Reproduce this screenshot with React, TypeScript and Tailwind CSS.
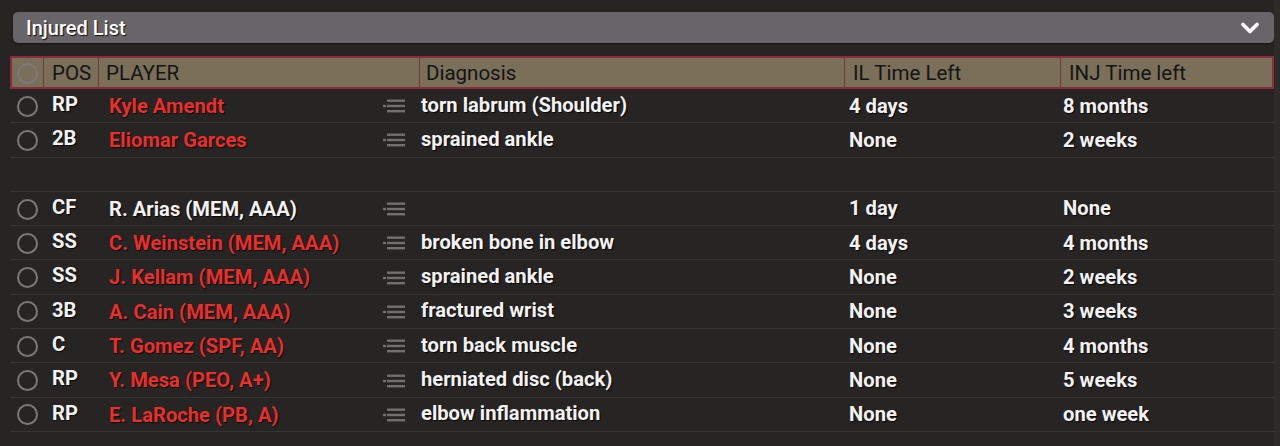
import { ChevronDown } from "lucide-react";

type Row = {
  pos: string;
  name: string;
  injured: boolean;
  diagnosis: string;
  il: string;
  inj: string;
} | null;

const rows: Row[] = [
  { pos: "RP", name: "Kyle Amendt", injured: true, diagnosis: "torn labrum (Shoulder)", il: "4 days", inj: "8 months" },
  { pos: "2B", name: "Eliomar Garces", injured: true, diagnosis: "sprained ankle", il: "None", inj: "2 weeks" },
  null,
  { pos: "CF", name: "R. Arias (MEM, AAA)", injured: false, diagnosis: "", il: "1 day", inj: "None" },
  { pos: "SS", name: "C. Weinstein (MEM, AAA)", injured: true, diagnosis: "broken bone in elbow", il: "4 days", inj: "4 months" },
  { pos: "SS", name: "J. Kellam (MEM, AAA)", injured: true, diagnosis: "sprained ankle", il: "None", inj: "2 weeks" },
  { pos: "3B", name: "A. Cain (MEM, AAA)", injured: true, diagnosis: "fractured wrist", il: "None", inj: "3 weeks" },
  { pos: "C", name: "T. Gomez (SPF, AA)", injured: true, diagnosis: "torn back muscle", il: "None", inj: "4 months" },
  { pos: "RP", name: "Y. Mesa (PEO, A+)", injured: true, diagnosis: "herniated disc (back)", il: "None", inj: "5 weeks" },
  { pos: "RP", name: "E. LaRoche (PB, A)", injured: true, diagnosis: "elbow inflammation", il: "None", inj: "one week" },
];

const cols = "grid grid-cols-[32px_55px_321px_425px_216px_1fr]";
const shadow = "[text-shadow:1px_1px_1px_rgba(0,0,0,0.85)]";

function ListIcon() {
  return (
    <svg width="23" height="14" viewBox="0 0 23 14" className="shrink-0">
      <rect x="4" y="0.5" width="18" height="2.4" fill="#707070" />
      <rect x="0" y="5.8" width="3" height="2.4" fill="#707070" />
      <rect x="4" y="5.8" width="18" height="2.4" fill="#707070" />
      <rect x="4" y="11" width="18" height="2.4" fill="#707070" />
    </svg>
  );
}

function Radio() {
  return <div className="h-[21px] w-[21px] rounded-full border-2 border-[#7a7878]" />;
}

export default function App() {
  return (
    <div className="flex h-[446px] w-[1280px] bg-[#262524] font-['Roboto',sans-serif]">
      <div className="flex w-[1274px] flex-col pl-[10px]">
        {/* dropdown bar */}
        <div className="ml-[3px] mt-[12px] flex h-[31px] items-center justify-between rounded-[5px] bg-[#686568] pl-[13px] pr-[10px] shadow-[0_1px_2px_rgba(0,0,0,0.5)]">
          <span className={`text-[20px] font-medium text-white ${shadow}`}>Injured List</span>
          <ChevronDown size={28} strokeWidth={3.2} className="text-white" />
        </div>

        {/* header */}
        <div className={`${cols} mt-[13px] h-[33px] border-2 border-[#8b2b3f] bg-[#7a6f58] text-[20.5px] text-[#141414]`}>
          <div className="flex items-center justify-center border-r border-[#6e3b3a]">
            <div className="h-[21px] w-[21px] rounded-full border-2 border-[#7d7880]" />
          </div>
          <div className="flex items-center border-r border-[#6e3b3a] pl-[8px]">POS</div>
          <div className="flex items-center border-r border-[#6e3b3a] pl-[7px]">PLAYER</div>
          <div className="flex items-center border-r border-[#6e3b3a] pl-[6px]">Diagnosis</div>
          <div className="flex items-center border-r border-[#6e3b3a] pl-[8px]">IL Time Left</div>
          <div className="flex items-center pl-[8px]">INJ Time left</div>
        </div>

        {/* rows */}
        {rows.map((r, i) =>
          r ? (
            <div
              key={i}
              className={`${cols} h-[34.3px] border-b border-[#363534] text-[20.2px] font-bold text-[#f2f2f2] ${shadow}`}
            >
              <div className="flex items-center justify-center pl-[2px]">
                <Radio />
              </div>
              <div className="flex items-center pl-[10px] pb-[4px]">{r.pos}</div>
              <div className="flex items-center justify-between pl-[12px] pr-[12px]">
                <span className={r.injured ? "text-[#e6302e]" : "text-[#f2f2f2]"}>{r.name}</span>
                <ListIcon />
              </div>
              <div className="flex items-center pl-[3px] pb-[3px]">{r.diagnosis}</div>
              <div className="flex items-center pl-[6px] pb-[1px]">{r.il}</div>
              <div className="flex items-center pl-[4px] pb-[1px]">{r.inj}</div>
            </div>
          ) : (
            <div key={i} className="h-[34.3px] border-b border-[#363534]" />
          ),
        )}
      </div>
      <div className="flex-1 bg-[#2c2b2a]" />
    </div>
  );
}
